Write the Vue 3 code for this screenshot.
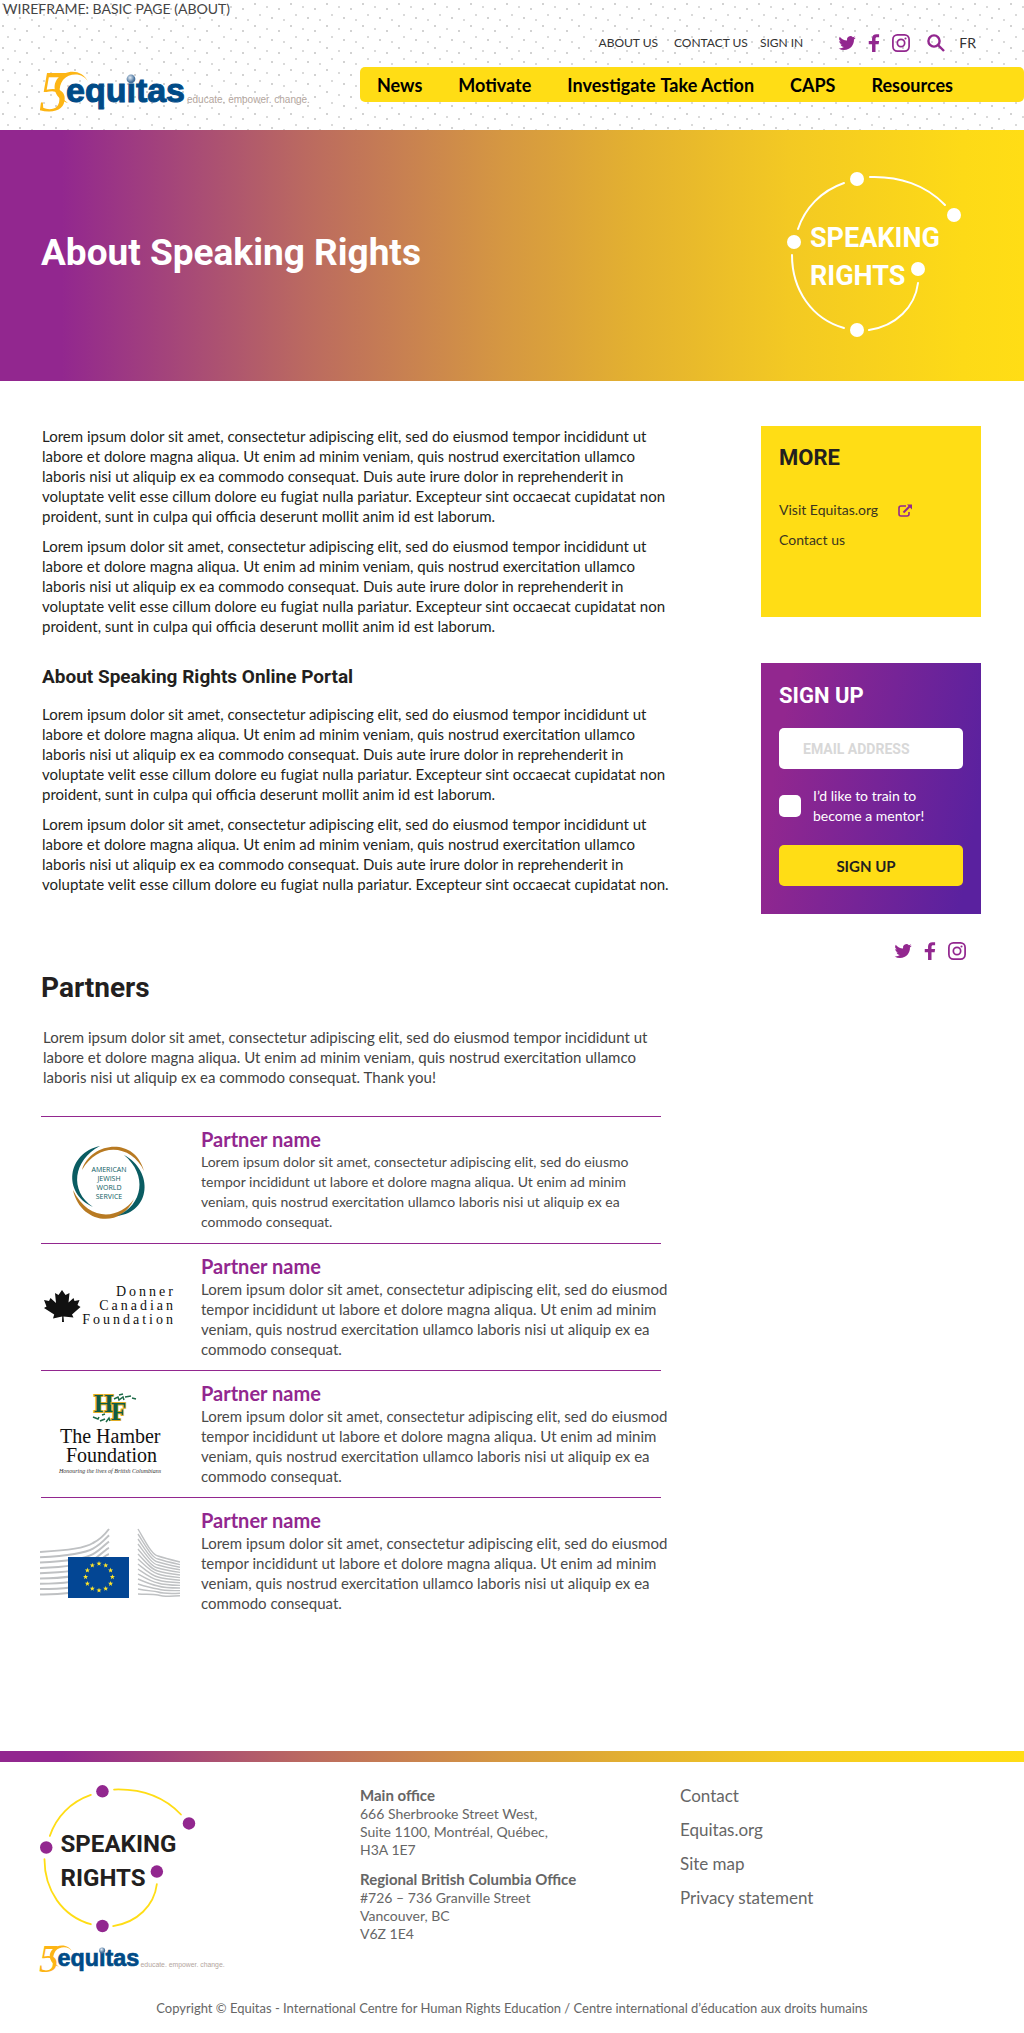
<script setup>
import { h } from 'vue'

const loremFull = `Lorem ipsum dolor sit amet, consectetur adipiscing elit, sed do eiusmod tempor incididunt ut
labore et dolore magna aliqua. Ut enim ad minim veniam, quis nostrud exercitation ullamco
laboris nisi ut aliquip ex ea commodo consequat. Duis aute irure dolor in reprehenderit in
voluptate velit esse cillum dolore eu fugiat nulla pariatur. Excepteur sint occaecat cupidatat non
proident, sunt in culpa qui officia deserunt mollit anim id est laborum.`
const loremShort = loremFull.split('\n').slice(0, 4).join('\n') + '.'
const loremIntro = `Lorem ipsum dolor sit amet, consectetur adipiscing elit, sed do eiusmod tempor incididunt ut
labore et dolore magna aliqua. Ut enim ad minim veniam, quis nostrud exercitation ullamco
laboris nisi ut aliquip ex ea commodo consequat. Thank you!`
const partnerText = (end) => `Lorem ipsum dolor sit amet, consectetur adipiscing elit, sed do ${end}
tempor incididunt ut labore et dolore magna aliqua. Ut enim ad minim
veniam, quis nostrud exercitation ullamco laboris nisi ut aliquip ex ea
commodo consequat.`

const partners = [
  { logo: 'ajws', text: partnerText('eiusmo'), small: true },
  { logo: 'donner', text: partnerText('eiusmod') },
  { logo: 'hamber', text: partnerText('eiusmod') },
  { logo: 'eu', text: partnerText('eiusmod') },
]

const mainNav = [
  ['News', 'news'],
  ['Motivate', 'motivate'],
  ['Investigate', 'investigate'],
  ['Take Action', 'action'],
  ['CAPS', 'caps'],
  ['Resources', 'resources'],
]

const stars = Array.from({ length: 12 }, (_, i) => {
  const cx = 59 + 13.4 * Math.sin((i * Math.PI) / 6)
  const cy = 49 - 13.4 * Math.cos((i * Math.PI) / 6)
  return Array.from({ length: 10 }, (_, k) => {
    const r = k % 2 ? 1.1 : 2.7
    const a = (k * Math.PI) / 5
    return `${(cx + r * Math.sin(a)).toFixed(2)},${(cy - r * Math.cos(a)).toFixed(2)}`
  }).join(' ')
})
const leftWaves = Array.from({ length: 9 }, (_, i) => {
  const y = 24 + i * 5.3
  return `M0 ${y} C30 ${y - 2 + i * 0.3} 45 ${y - 4} 53 ${y - 9 + i * 0.3} C61 ${y - 13} 66 ${y - 19} 69 ${y - 23 + i}`
})
const rightWaves = Array.from({ length: 14 }, (_, i) => {
  const y = 1 + i * 5
  const m = 28 + i * 3
  return `M98 ${y} C106 ${y + (m - y) * 0.5} 112 ${m - 1} 118 ${m} C124 ${m + 2} 132 ${m + 4 - i * 0.2} 140 ${34 + i * 2.6}`
})

const paths = {
  twitter:
    'M23.6 4.9c-.8.4-1.7.6-2.7.8 1-.6 1.7-1.5 2-2.6-.9.5-1.9.9-3 1.1A4.7 4.7 0 0 0 12 8.500C8.100 8.300 4.700 6.400 2.300 3.500a4.700 4.700 0 0 0 1.500 6.300c-.8 0-1.500-.2-2.100-.6 0 2.300 1.600 4.200 3.800 4.700-.7.2-1.400.2-2.100.1.600 1.900 2.300 3.200 4.400 3.300A9.500 9.500 0 0 1 .8 19.200 13.400 13.400 0 0 0 8 21.300c8.700 0 13.600-7.300 13.300-14 .9-.6 1.700-1.400 2.300-2.400z',
  facebook:
    'M14 24V13.500h4.200l.6-4.300H14V6.600c0-1.400.5-2.200 2.300-2.200h2.500V.4C18.300.3 16.900.2 15.300.2c-3.500 0-5.900 2-5.900 5.800v3.200H5v4.300h4.400V24z',
}
const Glyph = ({ name }) => {
  if (name === 'instagram') {
    return h('svg', { viewBox: '0 0 24 24', width: 18, height: 18, fill: 'none', stroke: 'currentColor', 'stroke-width': 2.3 }, [
      h('rect', { x: 1.2, y: 1.2, width: 21.6, height: 21.6, rx: 6 }),
      h('circle', { cx: 12, cy: 12, r: 4.9 }),
      h('circle', { cx: 18, cy: 6, r: 1.4, fill: 'currentColor', stroke: 'none' }),
    ])
  }
  if (name === 'search') {
    return h('svg', { viewBox: '0 0 18 18', width: 18, height: 18, fill: 'none', stroke: 'currentColor', 'stroke-width': 2.4 }, [
      h('circle', { cx: 7, cy: 7, r: 5.6 }),
      h('path', { d: 'M11 11l6 6' }),
    ])
  }
  return h('svg', { viewBox: '0 0 24 24', width: 18, height: 18, fill: 'currentColor' }, [h('path', { d: paths[name] })])
}

const EquitasLogo = () =>
  h('svg', { viewBox: '-4 -4 280 52', overflow: 'visible', role: 'img', 'aria-label': 'Equitas, 50 years' }, [
    h('defs', [
      h('radialGradient', { id: 'ball', cx: '40%', cy: '35%' }, [
        h('stop', { offset: '0', 'stop-color': '#e4ecf4' }),
        h('stop', { offset: '1', 'stop-color': '#49749f' }),
      ]),
    ]),
    h('text', { x: -1, y: 40, 'font-family': 'Liberation Serif, serif', 'font-style': 'italic', 'font-size': 58, fill: '#fdb515' }, '5'),
    h('path', { d: 'M48 11C44 2 30 1 23 9c-5 7-5 17 5 23-13-4-17-17-10-25C26-2 43-2 48 11z', fill: '#fdb515' }),
    h('text', { x: 26, y: 31, 'font-family': 'Liberation Sans, Arial, sans-serif', 'font-weight': 700, 'font-size': 34, fill: '#004b87', stroke: '#004b87', 'stroke-width': 1 }, 'equıtas'),
    h('circle', { cx: 91, cy: 8, r: 4.4, fill: 'url(#ball)' }),
    h('text', { x: 147, y: 32, 'font-family': 'Liberation Sans, Arial, sans-serif', 'font-size': 10, fill: '#b3a59d' }, 'educate. empower. change.'),
  ])

const SpeakingLogo = () =>
  h('svg', { viewBox: '0 0 176 168', role: 'img', 'aria-label': 'Speaking Rights' }, [
    h('g', { class: 'ring', fill: 'none', 'stroke-width': 2, 'stroke-linecap': 'round' }, [
      h('path', { d: 'M11 57C18 36 34 19 57 11' }),
      h('path', { d: 'M83 5C112 4 139 13 158 33' }),
      h('path', { d: 'M5 83C5 118 25 147 57 156' }),
      h('path', { d: 'M82 158C109 154 128 135 131 111' }),
    ]),
    h('g', { class: 'dots' }, [[70, 7], [167, 43], [7, 70], [131, 97], [70, 158]].map(([cx, cy]) => h('circle', { cx, cy, r: 7 }))),
    h('g', { class: 'words', 'font-family': 'Roboto, sans-serif', 'font-weight': 700, 'font-size': 27 }, [
      h('text', { x: 23, y: 75 }, 'SPEAKING'),
      h('text', { x: 23, y: 113 }, 'RIGHTS'),
    ]),
  ])
</script>

<template>
  <div class="page">
    <header class="site-header">
      <div class="wire-label">WIREFRAME: BASIC PAGE (ABOUT)</div>
      <a href="#home" class="brand"><EquitasLogo /></a>
      <div class="utility">
        <a class="u-about" href="#about">ABOUT US</a>
        <a class="u-contact" href="#contact">CONTACT US</a>
        <a class="u-sign" href="#signin">SIGN IN</a>
        <span class="social">
          <a href="#twitter" aria-label="Twitter"><Glyph name="twitter" /></a>
          <a href="#facebook" aria-label="Facebook"><Glyph name="facebook" /></a>
          <a href="#instagram" aria-label="Instagram"><Glyph name="instagram" /></a>
        </span>
        <button type="button" class="search" aria-label="Search"><Glyph name="search" /></button>
        <a class="lang" href="#fr">FR</a>
      </div>
      <nav class="main-nav">
        <a v-for="[label, id] in mainNav" :key="id" :class="'n-' + id" :href="'#' + id">{{ label }}</a>
      </nav>
    </header>

    <section class="hero">
      <h1>About Speaking Rights</h1>
      <SpeakingLogo class="speaking light" />
    </section>

    <div class="columns">
      <main>
        <article class="copy">
          <p>{{ loremFull }}</p>
          <p>{{ loremFull }}</p>
          <h2>About Speaking Rights Online Portal</h2>
          <p>{{ loremFull }}</p>
          <p>{{ loremShort }}</p>
        </article>

        <section class="partners">
          <h2>Partners</h2>
          <p class="intro">{{ loremIntro }}</p>
          <ul>
            <li v-for="p in partners" :key="p.logo">
              <svg v-if="p.logo === 'ajws'" class="logo" viewBox="0 0 140 126">
                <g fill="#b87a22">
                  <path d="M42 53C50 26 94 18 104 54C92 28 59 24 42 53z" />
                  <path d="M33 73C40 106 80 113 94 82C80 102 49 106 33 73z" />
                </g>
                <g fill="#0a5c62">
                  <path d="M60 29C27 36 22 76 53 90C29 74 33 43 60 29z" />
                  <path d="M84 38C114 54 111 95 77 99C103 88 108 58 84 38z" />
                </g>
                <g class="ajws-text">
                  <text x="69" y="55">AMERICAN</text>
                  <text x="69" y="64">JEWISH</text>
                  <text x="69" y="73">WORLD</text>
                  <text x="69" y="82">SERVICE</text>
                </g>
              </svg>
              <svg v-else-if="p.logo === 'donner'" class="logo" viewBox="0 0 140 126">
                <path d="M22 46l3.500 5 4-2-1 9.500 5-4.500 1 3 5-1-2 5 3 2-8.500 7.500 1.500 3-10-1 .5 5.500h-2l.2-5.500-9.200 2 1.200-4L4 64l2.500-1.500L4 56l5 1 1.500-3 5.500 5-1-10 3.500 2z" fill="#111" />
                <g class="donner-text">
                  <text x="136" y="52">Donner</text>
                  <text x="136" y="66">Canadian</text>
                  <text x="136" y="80">Foundation</text>
                </g>
              </svg>
              <svg v-else-if="p.logo === 'hamber'" class="logo" viewBox="0 0 140 126">
                <g class="hf">
                  <text x="54" y="41">H</text>
                  <text x="71" y="49">F</text>
                </g>
                <path d="M74 28l4-2 1 3 4-3 1 3m-5-5l4-1m2 3l6-1m1 2l4 1M53 46l5 2 1-2m1 4l5-2m1 3l3-4 1 3m-8-6l3-1" fill="none" stroke="#1d6b48" stroke-width="1.500" />
                <g class="hamber-text">
                  <text x="20" y="72">The Hamber</text>
                  <text x="26" y="91">Foundation</text>
                </g>
                <text x="70" y="102" class="hamber-tag">Honouring the lives of British Columbians</text>
              </svg>
              <svg v-else class="logo eu" viewBox="0 0 140 70">
                <g fill="none" stroke="#bfc1c3">
                  <path v-for="d in leftWaves" :key="d" :d="d" stroke-width="2" />
                  <path v-for="d in rightWaves" :key="d" :d="d" stroke-width="1.400" />
                </g>
                <rect x="28" y="29" width="61" height="41" fill="#034694" />
                <polygon v-for="s in stars" :key="s" :points="s" fill="#ffe52a" />
              </svg>
              <div class="info">
                <h3>Partner name</h3>
                <p :class="{ small: p.small }">{{ p.text }}</p>
              </div>
            </li>
          </ul>
        </section>
      </main>

      <aside>
        <section class="more">
          <h2>MORE</h2>
          <a href="#equitas">
            Visit Equitas.org
            <svg viewBox="0 0 15 13" width="15" height="13" fill="none" stroke="#92278f" stroke-width="1.600">
              <path d="M8 2H3a2 2 0 0 0-2 2v6a2 2 0 0 0 2 2h6a2 2 0 0 0 2-2V8" />
              <path d="M5.500 8.500l6-6" stroke-width="2" />
              <path d="M9 .5h5v5z" fill="#92278f" stroke="none" />
            </svg>
          </a>
          <a href="#contact-us">Contact us</a>
        </section>

        <form class="signup" @submit.prevent>
          <h2>SIGN UP</h2>
          <input type="email" aria-label="Email address" placeholder="EMAIL ADDRESS" />
          <label class="mentor"><input type="checkbox" /><span>I’d like to train to<br />become a mentor!</span></label>
          <button type="submit">SIGN UP</button>
        </form>

        <div class="social side-social">
          <a href="#twitter" aria-label="Twitter"><Glyph name="twitter" /></a>
          <a href="#facebook" aria-label="Facebook"><Glyph name="facebook" /></a>
          <a href="#instagram" aria-label="Instagram"><Glyph name="instagram" /></a>
        </div>
      </aside>
    </div>

    <footer>
      <div class="foot-grid">
        <div>
          <SpeakingLogo class="speaking dark" />
          <EquitasLogo class="foot-brand" />
        </div>
        <address>
          <p><b>Main office</b><br />666 Sherbrooke Street West,<br />Suite 1100, Montréal, Québec,<br />H3A 1E7</p>
          <p><b>Regional British Columbia Office</b><br />#726 – 736 Granville Street<br />Vancouver, BC<br />V6Z 1E4</p>
        </address>
        <nav class="foot-nav">
          <a href="#contact">Contact</a>
          <a href="#equitas">Equitas.org</a>
          <a href="#sitemap">Site map</a>
          <a href="#privacy">Privacy statement</a>
        </nav>
      </div>
      <p class="copyright">Copyright © Equitas - International Centre for Human Rights Education / Centre international d’éducation aux droits humains</p>
    </footer>
  </div>
</template>

<style>
body {
  margin: 0;
  background: #fff;
}
</style>

<style scoped>
.page {
  --purple: #92278f;
  --yellow: #ffdd15;
  --spectrum: linear-gradient(90deg, #92278f 6%, #bb6a60 30%, #d59742 49%, #e3b130 62%, #f3c923 77%, #fdda17 94%, #ffdd15);
  --heading: Roboto, sans-serif;
  font-family: Lato, sans-serif;
  font-size: 14px;
  line-height: 20px;
  color: #231f20;
}
h1, h2, h3, p, ul { margin: 0; padding: 0; }
a { color: inherit; text-decoration: none; }
svg { display: block; }

.site-header {
  display: grid;
  grid-template-columns: 360px 1fr;
  grid-template-rows: 18px 49px 35px 28px;
  background-image:
    radial-gradient(circle at 3px 4px, #d2d2d2 1px, transparent 1px),
    radial-gradient(circle at 15px 7px, #dadada 1px, transparent 1px),
    radial-gradient(circle at 27px 9px, #d2d2d2 1px, transparent 1px),
    radial-gradient(circle at 8px 15px, #dadada 1px, transparent 1px),
    radial-gradient(circle at 20px 18px, #d2d2d2 1px, transparent 1px),
    radial-gradient(circle at 32px 20px, #dadada 1px, transparent 1px);
  background-size: 36px 22px;
}
.wire-label { grid-column: 1 / 3; padding-left: 3px; line-height: 18px; color: #444; }
.brand { grid-column: 1; grid-row: 3 / 5; padding-left: 36px; align-self: start; }
.brand svg { width: 280px; height: 52px; }
.utility {
  grid-column: 2;
  grid-row: 2;
  display: flex;
  align-items: center;
  justify-content: flex-end;
  padding-right: 48px;
  font-size: 12px;
  color: #333;
}
.u-contact { margin-left: 16px; }
.u-sign { margin-left: 12px; }
.social { display: flex; gap: 9px; color: var(--purple); }
.utility .social { margin-left: 35px; }
.search { margin-left: 17px; padding: 0; border: 0; background: none; color: var(--purple); }
.lang { margin-left: 14px; font-size: 14px; }
.main-nav {
  grid-column: 2;
  grid-row: 3;
  display: flex;
  align-items: center;
  gap: 36px;
  background: var(--yellow);
  border-radius: 5px;
  padding-left: 17px;
  font-size: 18px;
  font-weight: 700;
  color: #000;
}
.n-action { margin-left: -31px; }

.hero {
  display: flex;
  align-items: center;
  justify-content: space-between;
  height: 251px;
  padding: 0 61px 0 41px;
  background: var(--spectrum);
}
h1 { font: 700 37px/44px var(--heading); color: #fff; padding-bottom: 6px; }
.speaking { width: 176px; height: 168px; }
.light :deep(.ring) { stroke: #fff; }
.light :deep(.dots), .light :deep(.words) { fill: #fff; }
.dark :deep(.ring) { stroke: #ffdd15; }
.dark :deep(.dots) { fill: #92278f; }
.dark :deep(.words) { fill: #231f20; }

.columns {
  display: grid;
  grid-template-columns: 1fr 220px;
  padding: 45px 43px 0 41px;
}
main { max-width: 620px; font-size: 15px; }
.copy { padding-left: 1px; }
.copy p, .partners p { white-space: pre; }
.copy p + p { margin-top: 10px; }
.copy h2 { font: 700 19px/26px var(--heading); margin: 28px 0 14px; }
.partners { margin-top: 74px; }
.partners h2 { font: 700 28px/40px var(--heading); }
.partners .intro { margin: 19px 0 29px; padding-left: 2px; color: #444; }
ul { list-style: none; }
li {
  display: grid;
  grid-template-columns: 160px 1fr;
  height: 126px;
  border-top: 1px solid var(--purple);
}
.logo { width: 140px; height: 126px; margin-left: -1px; }
.logo.eu { height: 70px; margin-top: 30px; }
h3 { margin-top: 9px; font-size: 20px; line-height: 26px; color: var(--purple); }
.info p { color: #4a4a4a; }
.info p.small { font-size: 14px; }
.ajws-text { font: 7px 'Open Sans', sans-serif; fill: #0a5c62; text-anchor: middle; }
.donner-text { font: 14px 'Liberation Serif', serif; letter-spacing: 3px; fill: #111; text-anchor: end; }
.hf { font: 700 25px 'Liberation Serif', serif; fill: #0f5c45; stroke: #e0ac24; stroke-width: 2px; paint-order: stroke; }
.hamber-text { font: 20px 'Liberation Serif', serif; fill: #111; }
.hamber-tag { font: italic 6px 'Liberation Serif', serif; fill: #333; text-anchor: middle; }

.more {
  display: flex;
  flex-direction: column;
  gap: 10px;
  height: 173px;
  padding: 18px 18px 0;
  background: var(--yellow);
}
.more h2, .signup h2 { font: 700 22px/28px var(--heading); }
.more h2 { margin-bottom: 18px; }
.more a { display: flex; align-items: center; gap: 20px; color: #3b3520; }
.signup {
  display: flex;
  flex-direction: column;
  margin-top: 46px;
  padding: 19px 18px 28px;
  background: linear-gradient(100deg, #92278f 12%, #5a219f 92%);
  color: #fff;
}
.signup input[type='email'] {
  box-sizing: border-box;
  width: 100%;
  height: 41px;
  margin-top: 18px;
  padding: 0 24px;
  border: 0;
  border-radius: 5px;
  background: #fff;
  font: 700 14px/20px var(--heading);
}
.signup input::placeholder { color: #d8d8d8; opacity: 1; }
.mentor { display: flex; align-items: center; gap: 12px; margin: 17px 0 19px; }
.mentor input { appearance: none; width: 22px; height: 22px; margin: 0; border-radius: 5px; background: #fff; }
.signup button {
  height: 41px;
  border: 0;
  border-radius: 5px;
  background: var(--yellow);
  color: #231f20;
  font: 700 15px/20px Lato, sans-serif;
  padding: 0 10px 0 0;
}
.side-social { justify-content: flex-end; padding: 28px 15px 0 0; }

footer {
  margin-top: 127px;
  color: #666;
}
footer::before {
  content: '';
  display: block;
  height: 11px;
  background: var(--spectrum);
}
.foot-grid {
  display: grid;
  grid-template-columns: 320px 320px 1fr;
  padding: 23px 40px 0;
}
.dark.speaking { width: 157px; height: 150px; }
.foot-brand { width: 192px; height: 36px; margin: 7px 0 0 -3px; }
address { font-style: normal; line-height: 18px; padding-top: 2px; }
address b { font-size: 15px; line-height: 15px; }
address p + p { margin-top: 12px; }
.foot-nav { display: flex; flex-direction: column; gap: 14px; font-size: 17px; padding-top: 1px; }
.copyright { margin-top: 20px; padding-bottom: 14px; text-align: center; font-size: 13px; }
</style>
